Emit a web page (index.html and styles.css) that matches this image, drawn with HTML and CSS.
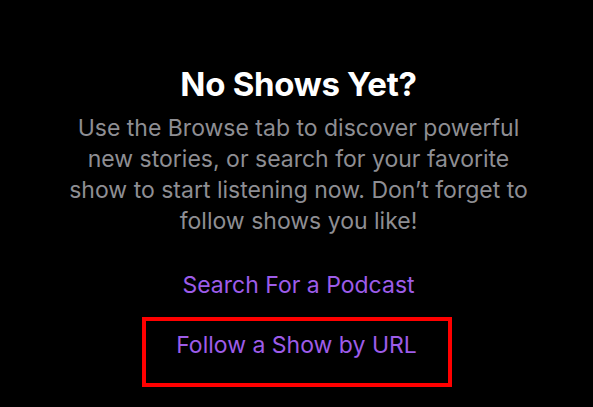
FILE: index.html
```html
<!DOCTYPE html>
<html lang="en">
<head>
    <meta charset="UTF-8">
    <meta name="viewport" content="width=device-width, initial-scale=1.0">
    <title>Podcasts</title>
    <link rel="stylesheet" href="styles.css">
</head>
<body>
    <div class="empty">
        <h1 class="empty__title">No Shows Yet?</h1>
        <p class="empty__text">Use the Browse tab to discover powerful<br>new stories, or search for your favorite<br>show to start listening now. Don’t forget to<br>follow shows you like!</p>
        <a class="empty__link" href="#">Search For a Podcast</a>
        <div class="highlight">
            <a class="empty__link" href="#">Follow a Show by URL</a>
        </div>
    </div>
</body>
</html>
```

FILE: styles.css
```css
*{
    margin: 0;
    padding: 0;
    box-sizing: border-box;
}
body {
    background: #000;
    font-family: Inter, "Noto Sans", sans-serif;
    width: 593px;
    height: 407px;
    overflow: hidden;
}

.empty {
    display: flex;
    flex-direction: column;
    align-items: center;
    padding-top: 64px;
    padding-left: 4px;
}

.empty__title {
    color: #fff;
    font-size: 33px;
    font-weight: 700;
    line-height: 40px;
    letter-spacing: -0.3px;
}

.empty__text {
    margin-top: 9px;
    color: #8e8e93;
    font-size: 23px;
    line-height: 31px;
    text-align: center;
    white-space: nowrap;
}

.empty__link {
    margin-top: 34px;
    color: #9d5ce9;
    font-size: 23px;
    line-height: 28px;
    text-decoration: none;
}

.highlight {
    margin-top: 18px;
    margin-right: 4px;
    width: 310px;
    height: 70px;
    padding-top: 10px;
    border: 4px solid #f00;
    display: flex;
    justify-content: center;
}
.highlight .empty__link {
    margin-top: 0;
}
```
